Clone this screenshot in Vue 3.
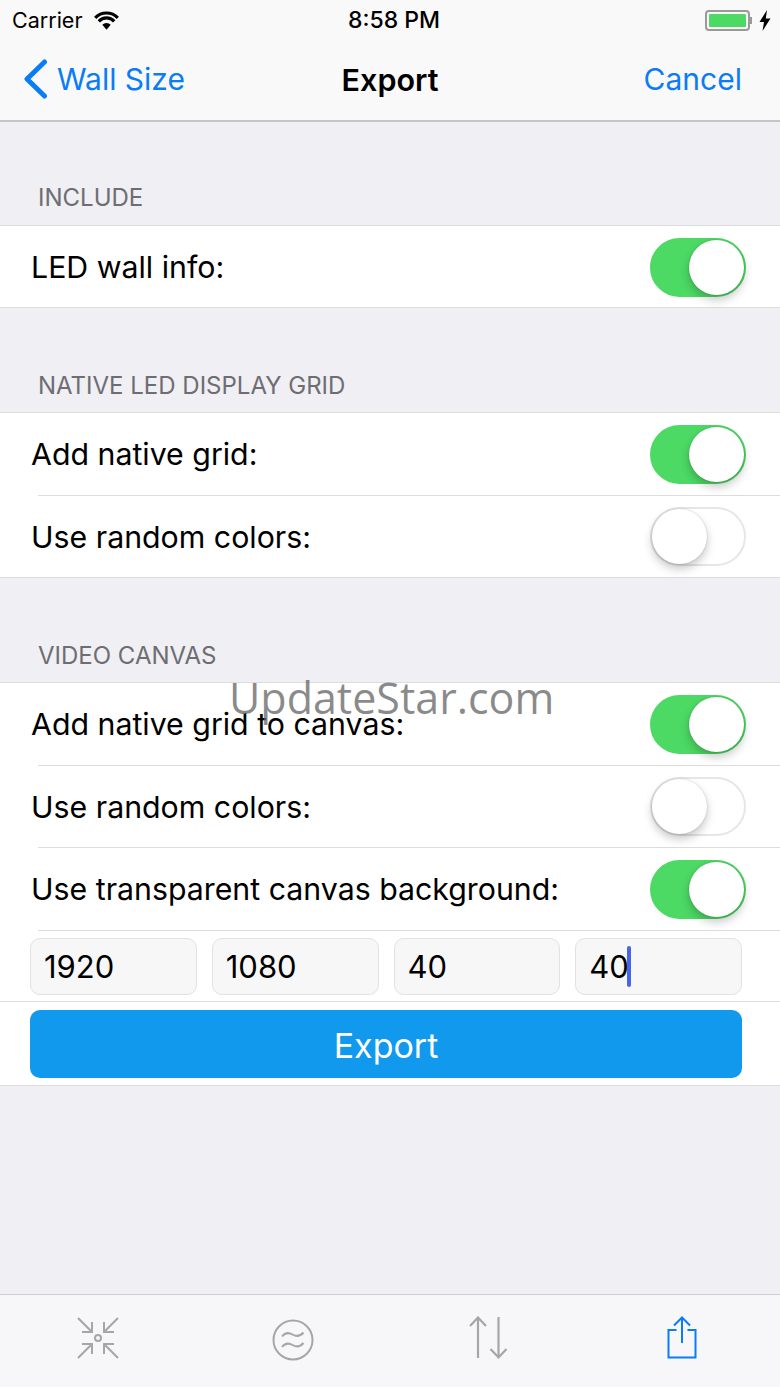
<template>
  <div class="screen">
    <header class="top">
      <div class="status">
        <div class="status-left">
          <span>Carrier</span>
          <svg class="wifi" width="25" height="19" viewBox="0 0 25 19">
            <path d="M1.200 6.900a15.500 15.500 0 0 1 22.600 0" stroke="#000" stroke-width="3.200" fill="none" />
            <path d="M4.800 10.300a10.500 10.500 0 0 1 15.400 0" stroke="#000" stroke-width="3.200" fill="none" />
            <path d="M12.500 18.800 8.300 13.700a5.800 5.800 0 0 1 8.400 0z" fill="#000" />
          </svg>
        </div>
        <span class="clock">8:58 PM</span>
        <div class="status-right">
          <span class="battery"><span class="battery-fill"></span></span>
          <span class="battery-tip"></span>
          <svg width="12" height="21" viewBox="0 0 12 21" class="bolt">
            <path d="M8 0 0.500 12H5L3.500 21 11.500 8.500H6.800z" fill="#000" />
          </svg>
        </div>
      </div>
      <nav class="navbar">
        <a class="back">
          <svg width="26" height="40" viewBox="0 0 26 40">
            <path d="M20.500 3 3 20 20.500 37" fill="none" stroke="#0a7cf5" stroke-width="5" stroke-linecap="round" stroke-linejoin="round" />
          </svg>
          <span>Wall Size</span>
        </a>
        <strong class="nav-title">Export</strong>
        <a class="cancel">Cancel</a>
      </nav>
    </header>

    <main class="content">
      <section v-for="group in groups" :key="group.title" class="group">
        <h2 class="group-title">{{ group.title }}</h2>
        <ul class="list">
          <li v-for="row in group.rows" :key="row.label" class="row">
            <span>{{ row.label }}</span>
            <span class="switch" :class="{ on: row.on }"><span class="knob"></span></span>
          </li>
          <li v-if="group.fields" class="row row-fields">
            <div v-for="(field, i) in fields" :key="i" class="field">
              {{ field }}<span v-if="i === fields.length - 1" class="caret"></span>
            </div>
          </li>
          <li v-if="group.fields" class="row-button">
            <button class="export-btn">Export</button>
          </li>
        </ul>
      </section>
    </main>

    <footer class="tabbar">
      <div class="tab">
        <svg width="44" height="44" viewBox="0 0 44 44" fill="none" stroke="#a6a6a6" stroke-width="2">
          <circle cx="22" cy="22" r="3" />
          <path d="M2 2 16 16M16 6V16H6M42 2 28 16M28 6V16H38M2 42 16 28M6 28H16V38M42 42 28 28M38 28H28V38" />
        </svg>
      </div>
      <div class="tab">
        <svg class="tab-wave" width="42" height="42" viewBox="0 0 42 42" fill="none" stroke="#a6a6a6" stroke-width="2">
          <circle cx="21" cy="21" r="19.500" />
          <path d="M10 17.500c3-4 7-4 10.500-2s7.500 2 11-2M10 28c3-4 7-4 10.500-2s7.500 2 11-2" />
        </svg>
      </div>
      <div class="tab">
        <svg width="42" height="44" viewBox="0 0 42 44" fill="none" stroke="#a6a6a6" stroke-width="2.200">
          <path d="M11 1V42M3 10 11 1.500 19 10M31.500 1V42M23.500 33 31.500 41.500 39.500 33" />
        </svg>
      </div>
      <div class="tab">
        <svg class="tab-share" width="30" height="44" viewBox="0 0 30 44" fill="none" stroke="#0a7cf5" stroke-width="2">
          <path d="M9.500 14H1.500V41.500H28.500V14H20.500M15 27V2M7 9.500 15 1.500 23 9.500" />
        </svg>
      </div>
    </footer>

    <div class="watermark">UpdateStar.com</div>
  </div>
</template>

<script setup>
const groups = [
  {
    title: "INCLUDE",
    rows: [{ label: "LED wall info:", on: true }],
  },
  {
    title: "NATIVE LED DISPLAY GRID",
    rows: [
      { label: "Add native grid:", on: true },
      { label: "Use random colors:", on: false },
    ],
  },
  {
    title: "VIDEO CANVAS",
    fields: true,
    rows: [
      { label: "Add native grid to canvas:", on: true },
      { label: "Use random colors:", on: false },
      { label: "Use transparent canvas background:", on: true },
    ],
  },
];

const fields = ["1920", "1080", "40", "40"];
</script>

<style>
html,
body {
  margin: 0;
  background: #efeff4;
}
</style>

<style scoped>
.screen {
  position: relative;
  width: 780px;
  height: 1387px;
  display: flex;
  flex-direction: column;
  background: #efeff4;
  font-family: Inter, "Liberation Sans", sans-serif;
  color: #000;
  overflow: hidden;
}

.top {
  height: 120px;
  flex: none;
  background: #f9f9f9;
  border-bottom: 2px solid #c6c6c6;
}

.status {
  height: 40px;
  padding: 0 4px 0 12px;
  display: grid;
  grid-template-columns: 1fr auto 1fr;
  align-items: center;
  font-size: 21.5px;
}

.status-left {
  display: flex;
  align-items: center;
  gap: 12px;
}

.clock {
  font-size: 23px;
  font-weight: 500;
}

.status-right {
  display: flex;
  align-items: center;
  justify-content: flex-end;
  padding-right: 5px;
}

.battery {
  width: 45px;
  height: 21px;
  box-sizing: border-box;
  border: 2px solid #9a9a9a;
  border-radius: 4px;
  padding: 2px;
  display: flex;
}

.battery-fill {
  flex: 1;
  background: #4cd964;
  border-radius: 1px;
}

.battery-tip {
  width: 2px;
  height: 7px;
  background: #9a9a9a;
  margin-right: 7px;
}

.navbar {
  height: 80px;
  padding: 0 24px 2px;
  box-sizing: border-box;
  display: grid;
  grid-template-columns: 1fr auto 1fr;
  align-items: center;
  font-size: 30px;
}

.back {
  display: flex;
  align-items: center;
  gap: 7px;
  color: #0a7cf5;
}

.nav-title {
  font-size: 30.500px;
  font-weight: 600;
}

.cancel {
  color: #0a7cf5;
  text-align: right;
  padding-right: 14px;
}

.content {
  flex: 1;
}

.group-title {
  margin: 0;
  height: 104px;
  box-sizing: border-box;
  padding: 0 38px 12px;
  display: flex;
  align-items: flex-end;
  font-size: 24px;
  font-weight: 400;
  color: #6d6d72;
}

.group:first-child .group-title {
  height: 103px;
  padding-bottom: 13px;
}

.list {
  list-style: none;
  margin: 0;
  padding: 0;
  background: #fff;
  border-top: 1px solid #dcdcdf;
  border-bottom: 1px solid #dcdcdf;
}

.row {
  height: 81.500px;
  box-sizing: border-box;
  padding: 1px 34px 0 31px;
  display: flex;
  align-items: center;
  justify-content: space-between;
  font-size: 30.300px;
  position: relative;
}

.group:first-child .row {
  height: 81px;
}

.row + .row::before {
  content: "";
  position: absolute;
  top: -1px;
  left: 38px;
  right: 0;
  height: 1px;
  background: #dcdcdf;
}

.row + .row {
  margin-top: 1px;
}

.switch {
  width: 96px;
  height: 59px;
  box-sizing: border-box;
  border-radius: 30px;
  border: 2px solid #e6e6e6;
  background: #fff;
  position: relative;
}

.switch.on {
  background: #4cd964;
  border-color: #4cd964;
}

.knob {
  position: absolute;
  top: 0;
  left: 0;
  width: 55px;
  height: 55px;
  border-radius: 50%;
  background: #fff;
  box-shadow: 0 5px 10px rgba(0, 0, 0, 0.22), 0 0 2px rgba(0, 0, 0, 0.2);
}

.switch.on .knob {
  left: 37px;
}

.row-fields {
  height: 70px;
  padding: 2px 38px 0 30px;
  gap: 15px;
  justify-content: flex-start;
}

.field {
  flex: 1;
  height: 57px;
  box-sizing: border-box;
  border: 1px solid #e2e2e2;
  border-radius: 10px;
  background: #f7f7f7;
  padding: 0 13px;
  display: flex;
  align-items: center;
  font-size: 31px;
}

.caret {
  width: 4px;
  height: 41px;
  margin-left: -2px;
  border-radius: 2px;
  background: #4a64e8;
}

.row-button {
  padding: 8px 38px 7px 30px;
  border-top: 1px solid #dcdcdf;
}

.export-btn {
  display: block;
  width: 100%;
  height: 68px;
  padding: 3px 0 0;
  border: 0;
  border-radius: 10px;
  background: #1199ee;
  color: #fff;
  font-family: inherit;
  font-size: 34px;
}

.tabbar {
  height: 92px;
  flex: none;
  border-top: 1px solid #d0d0d2;
  background: #f7f7f9;
  display: grid;
  grid-template-columns: repeat(4, 1fr);
}

.tab {
  display: flex;
  justify-content: center;
  padding-top: 21px;
}

.tab-wave {
  margin-top: 3px;
}

.tab-share {
  margin-right: 2px;
}

.watermark {
  position: absolute;
  top: 668px;
  left: 229px;
  font-family: "Open Sans", sans-serif;
  font-size: 43px;
  color: rgba(100, 100, 100, 0.75);
}
</style>
